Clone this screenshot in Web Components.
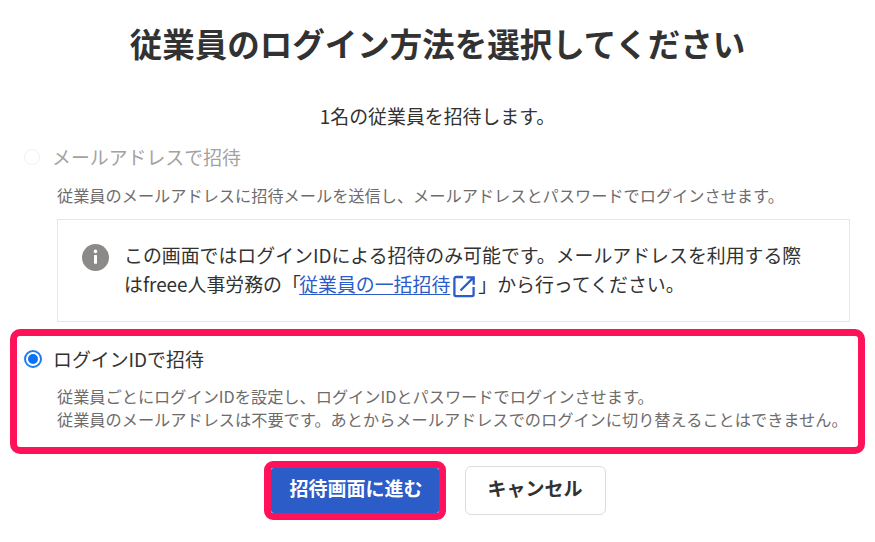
<!DOCTYPE html>
<html lang="ja">
<head>
<meta charset="utf-8">
<title>従業員のログイン方法を選択してください</title>
<style>
  html, body { margin: 0; background: #fff; }
  body { font-family: "Noto Sans CJK JP", "Noto Sans", sans-serif; color: #323232; overflow: hidden; }
  .open-bracket { letter-spacing: -6px; }
</style>
</head>
<body>
<template id="login-page-tpl">
  <style>
    :host { display: block; width: 875px; height: 542px; padding-top: 21px; box-sizing: border-box; }
    h1 { margin: 0; font-size: 32.5px; line-height: 44px; font-weight: 700; text-align: center; color: #323232; }
    .lead { margin: 38px 0 0; font-size: 18.9px; line-height: 26px; text-align: center; }
    .body { padding: 0 10px; }
    .buttons { display: flex; justify-content: center; gap: 19px; align-items: center; margin-top: 7px; padding-right: 6px; }
  </style>
  <h1><slot name="title"></slot></h1>
  <p class="lead"><slot name="lead"></slot></p>
  <div class="body"><slot></slot></div>
  <div class="buttons"><slot name="buttons"></slot></div>
</template>

<template id="login-option-tpl">
  <style>
    :host { display: block; box-sizing: border-box; padding: 0 7px 0 7px; }
    :host([highlight]) { border: 7px solid #ff1259; border-radius: 10px; background: #fff; padding: 0; height: 125px; }
    .head { display: flex; align-items: center; gap: 11px; height: 30px; font-size: 18.9px; line-height: 30px; color: #323232; }
    :host([disabled]) .head { color: #a3a2a2; }
    :host([highlight]) .head { padding: 8px 0 0 7px; }
    :host(:not([highlight])) .head { padding: 13px 0 0 6px; }
    .radio { box-sizing: border-box; width: 18px; height: 18px; border-radius: 50%; border: 2px solid #1f7cf0; flex: none; background: #fff; display: flex; align-items: center; justify-content: center; }
    .radio i { display: block; width: 10px; height: 10px; border-radius: 50%; background: #0a72f5; }
    :host([disabled]) .radio { border: 1px solid #f0f0f0; width: 16px; height: 16px; margin: 0 1px; }
    :host([disabled]) .radio i { display: none; }
    .desc { font-size: 16.2px; line-height: 24px; color: #6e6b6b; padding: 11px 0 0 40px; }
    :host([highlight]) .desc { padding: 11px 0 0 40px; line-height: 23px; }
  </style>
  <div class="head"><span class="radio"><i></i></span><slot name="label"></slot></div>
  <div class="desc"><slot></slot></div>
</template>

<template id="info-box-tpl">
  <style>
    :host { display: flex; box-sizing: border-box; width: 793px; height: 103px; margin: 12px 0 7px 47px; padding: 20px 35px 0 24px; border: 1px solid #e6e6e6; gap: 15px; font-size: 18.9px; line-height: 29px; color: #323232; }
    svg { flex: none; width: 27px; height: 27px; margin-top: 4px; }
    .text { flex: 1; }
  </style>
  <svg viewBox="0 0 27 27" aria-hidden="true">
    <circle cx="13.5" cy="13.5" r="13.5" fill="#8c8a89"/>
    <circle cx="13.5" cy="7.4" r="1.8" fill="#fff"/>
    <rect x="12" y="11" width="3" height="8.8" rx="0.5" fill="#fff"/>
  </svg>
  <div class="text"><slot></slot></div>
</template>

<template id="ext-link-tpl">
  <style>
    :host { display: inline; color: #2b5cc8; }
    a { color: inherit; text-decoration: underline; text-underline-offset: 2px; }
    svg { width: 23px; height: 23px; vertical-align: -6px; margin: 0 2px 0 3px; }
  </style>
  <a href="#"><slot></slot></a><svg viewBox="0 0 23 23" fill="none" stroke="#2b5cc8" stroke-width="2.3" aria-hidden="true">
    <path d="M10 2H3A1.6 1.6 0 0 0 1.4 3.6v16A1.6 1.6 0 0 0 3 21.2h16a1.6 1.6 0 0 0 1.6-1.6V12"/>
    <path d="M13.5 2.4h7.2v7.4M20.4 2.6L7.5 15.5"/>
  </svg></template>

<template id="action-button-tpl">
  <style>
    :host { display: block; flex: none; }
    :host([primary]) { border: 7px solid #ff1259; border-radius: 9px; }
    button { display: block; box-sizing: border-box; margin: 0; font: 700 19px/1 "Noto Sans CJK JP", "Noto Sans", sans-serif; border-radius: 6px; cursor: pointer; }
    :host([primary]) button { width: 168px; height: 45px; padding: 0 0 6px 3px; background: #2b5cc8; color: #fff; border: 0; border-radius: 3px; }
    :host(:not([primary])) button { width: 141px; height: 49px; padding: 0 0 6px; background: #fff; color: #323232; border: 1px solid #dcdcdc; }
  </style>
  <button type="button"><slot></slot></button>
</template>

<login-page>
  <span slot="title">従業員のログイン方法を選択してください</span>
  <span slot="lead">1名の従業員を招待します。</span>
  <login-option disabled>
    <span slot="label">メールアドレスで招待</span>
    従業員のメールアドレスに招待メールを送信し、メールアドレスとパスワードでログインさせます。
  </login-option>
  <info-box>
    <div>この画面ではログインIDによる招待のみ可能です。メールアドレスを利用する際</div>
    <div>はfreee人事労務の<span class="open-bracket">「</span><ext-link>従業員の一括招待</ext-link>」から行ってください。</div>
  </info-box>
  <login-option highlight>
    <span slot="label">ログインIDで招待</span>
    従業員ごとにログインIDを設定し、ログインIDとパスワードでログインさせます。<br>
    従業員のメールアドレスは不要です。あとからメールアドレスでのログインに切り替えることはできません。
  </login-option>
  <action-button slot="buttons" primary>招待画面に進む</action-button>
  <action-button slot="buttons">キャンセル</action-button>
</login-page>

<script>
  // all elements share the same shape: clone the template into an open shadow root
  function register(tag, tplId) {
    class Comp extends HTMLElement {
      constructor() {
        super();
        this.attachShadow({ mode: 'open' });
        this.shadowRoot.appendChild(document.getElementById(tplId).content.cloneNode(true));
      }
    }
    customElements.define(tag, Comp);
  }

  register('login-page', 'login-page-tpl');
  register('login-option', 'login-option-tpl');
  register('info-box', 'info-box-tpl');
  register('ext-link', 'ext-link-tpl');
  register('action-button', 'action-button-tpl');
</script>
</body>
</html>
